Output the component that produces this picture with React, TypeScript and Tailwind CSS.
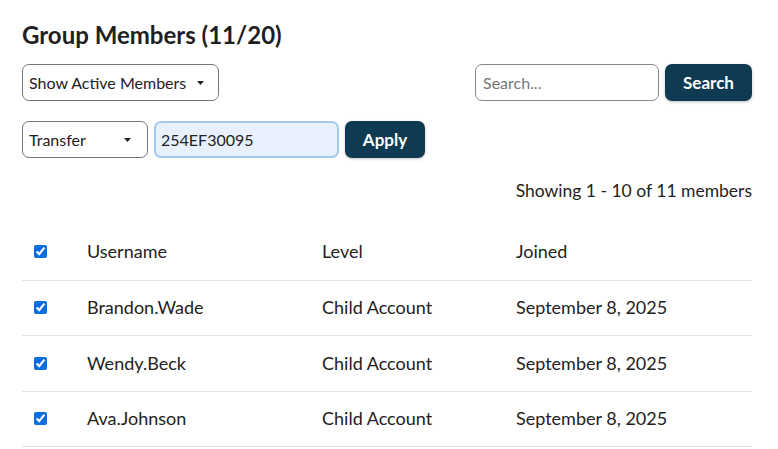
import React from "react";

const MEMBERS = [
  { username: "Brandon.Wade", level: "Child Account", joined: "September 8, 2025" },
  { username: "Wendy.Beck", level: "Child Account", joined: "September 8, 2025" },
  { username: "Ava.Johnson", level: "Child Account", joined: "September 8, 2025" },
];

function Caret() {
  return (
    <svg width="7" height="4" viewBox="0 0 7 4" className="shrink-0">
      <path d="M0 0h7L3.5 4z" fill="#222" />
    </svg>
  );
}

function Check() {
  return (
    <input
      type="checkbox"
      defaultChecked
      className="m-0 h-[13px] w-[13px] accent-[#0b6ee0]"
    />
  );
}

export default function App() {
  return (
    <div
      className="min-h-screen bg-white pl-[22px] pr-[26px] pt-[20px] text-[#222]"
      style={{ fontFamily: "Lato, 'Open Sans', sans-serif" }}
    >
      <h1 className="text-[24px] font-bold leading-[30px] text-[#1f1f1f]">
        Group Members (11/20)
      </h1>

      <div className="mt-[14px] flex items-center justify-between">
        <button className="flex h-[37px] w-[197px] items-center gap-[11px] rounded-[7px] border border-[#777] bg-white pl-[6px] text-[16px]">
          <span>Show Active Members</span>
          <Caret />
        </button>
        <div className="flex items-center gap-[6px]">
          <input
            placeholder="Search..."
            className="h-[37px] w-[184px] rounded-[7px] border border-[#888] px-[7px] text-[16px] outline-none placeholder:text-[#777]"
          />
          <button className="h-[37px] w-[87px] rounded-[7px] bg-[#0e3a52] text-[17px] font-bold text-white shadow-[0_1px_3px_rgba(0,0,0,0.25)]">
            Search
          </button>
        </div>
      </div>

      <div className="mt-[20px] flex items-center gap-[6px]">
        <button className="flex h-[37px] w-[126px] items-center justify-between rounded-[7px] border border-[#777] bg-white pl-[6px] pr-[16px] text-[16px]">
          <span>Transfer</span>
          <Caret />
        </button>
        <input
          defaultValue="254EF30095"
          className="h-[37px] w-[185px] rounded-[7px] border-2 border-[#a5c8ef] bg-[#e8f0fe] px-[5px] text-[16px] outline-none"
        />
        <button className="h-[37px] w-[80px] rounded-[7px] bg-[#0e3a52] text-[17px] font-bold text-white shadow-[0_1px_3px_rgba(0,0,0,0.25)]">
          Apply
        </button>
      </div>

      <div className="mt-[23px] text-right text-[17.5px] leading-[20px]">
        Showing 1 - 10 of 11 members
      </div>

      <table className="mt-[23px] w-full border-collapse text-left text-[18px]">
        <thead>
          <tr className="h-[56px] border-b border-[#e2e2e2]">
            <th className="w-[65px] pl-[12px] align-middle font-normal">
              <Check />
            </th>
            <th className="w-[235px] font-normal">Username</th>
            <th className="w-[194px] font-normal">Level</th>
            <th className="font-normal">Joined</th>
          </tr>
        </thead>
        <tbody>
          {MEMBERS.map((m) => (
            <tr key={m.username} className="h-[55.5px] border-b border-[#e2e2e2]">
              <td className="pl-[12px] align-middle">
                <Check />
              </td>
              <td>{m.username}</td>
              <td>{m.level}</td>
              <td>{m.joined}</td>
            </tr>
          ))}
        </tbody>
      </table>
    </div>
  );
}
